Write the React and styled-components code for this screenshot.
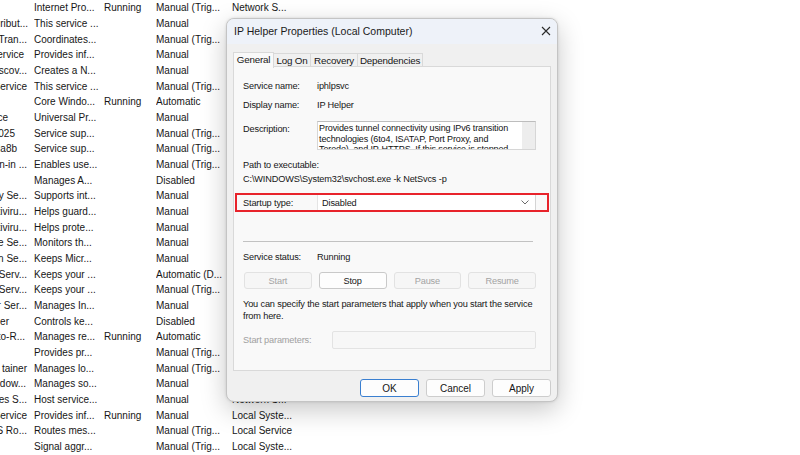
import styled, { createGlobalStyle } from "styled-components";

const GlobalStyle = createGlobalStyle`
  html, body {
    margin: 0;
    padding: 0;
    background: #fff;
  }
  body {
    width: 800px;
    height: 455px;
    overflow: hidden;
    font-family: "Liberation Sans", Arial, sans-serif;
  }
`;

// background services list (name, end of name fragment, description, status, startup, log on)
const services = [
  ["", 28, "Internet Pro...", "Running", "Manual (Trig...", "Network S..."],
  ["ribut...", 28, "This service ...", "", "Manual", "Local Syste..."],
  ["Tran...", 27, "Coordinates...", "", "Manual (Trig...", "Local Syste..."],
  ["ervice", 24, "Provides inf...", "", "Manual", "Local Service"],
  ["scov...", 27, "Creates a N...", "", "Manual", "Local Service"],
  ["Service", 27, "This service ...", "", "Manual (Trig...", "Local Syste..."],
  ["", 28, "Core Windo...", "Running", "Automatic", "Local Syste..."],
  ["ce", 8, "Universal Pr...", "", "Manual", "Local Syste..."],
  ["025", 15, "Service sup...", "", "Manual (Trig...", "Local Syste..."],
  ["la8b", 17, "Service sup...", "", "Manual (Trig...", "Local Syste..."],
  ["n-in ...", 27, "Enables use...", "", "Manual (Trig...", "Local Syste..."],
  ["", 28, "Manages A...", "", "Disabled", "Local Syste..."],
  ["y Se...", 27, "Supports int...", "", "Manual", "Local Syste..."],
  ["tiviru...", 27, "Helps guard...", "", "Manual", "Local Service"],
  ["tiviru...", 27, "Helps prote...", "", "Manual", "Local Syste..."],
  ["re Se...", 27, "Monitors th...", "", "Manual", "Local Syste..."],
  ["on Se...", 27, "Keeps Micr...", "", "Manual", "Local Syste..."],
  ["Serv...", 27, "Keeps your ...", "", "Automatic (D...", "Local Syste..."],
  ["Serv...", 27, "Keeps your ...", "", "Manual (Trig...", "Local Syste..."],
  ["r Ser...", 27, "Manages In...", "", "Manual", "Local Syste..."],
  ["er", 9, "Controls ke...", "", "Disabled", "Local Syste..."],
  ["to-R...", 25, "Manages re...", "Running", "Automatic", "Local Syste..."],
  ["", 28, "Provides pr...", "", "Manual (Trig...", "Local Syste..."],
  ["tainer", 27, "Manages lo...", "", "Manual (Trig...", "Local Syste..."],
  ["dow...", 26, "Manages so...", "", "Manual", "Local Syste..."],
  ["es S...", 27, "Host service...", "", "Manual", "Network S..."],
  ["Service", 27, "Provides inf...", "Running", "Manual", "Local Syste..."],
  ["S Ro...", 27, "Routes mes...", "", "Manual (Trig...", "Local Service"],
  ["", 28, "Signal aggr...", "", "Manual (Trig...", "Local Syste..."],
];

const descLines = [
  "Provides tunnel connectivity using IPv6 transition",
  "technologies (6to4, ISATAP, Port Proxy, and",
  "Teredo), and IP-HTTPS. If this service is stopped,",
  "the computer will not have the enhanced",
  "connectivity benefits that these technologies offer.",
];

export default function App() {
  return (
    <Screen>
      <GlobalStyle />
      <List>
        {services.map((s, i) => (
          <Row key={i}>
            <NameCell end={s[1]}>
              <span>{s[0]}</span>
            </NameCell>
            <Cell>{s[2]}</Cell>
            <Cell>{s[3]}</Cell>
            <Cell>{s[4]}</Cell>
            <Cell>{s[5]}</Cell>
          </Row>
        ))}
      </List>

      <Dialog>
        <TitleBar>
          <span>IP Helper Properties (Local Computer)</span>
          <svg width="10" height="10" viewBox="0 0 10 10">
            <path d="M1 1 L9 9 M9 1 L1 9" stroke="#2b2b2b" strokeWidth="1.1" fill="none" />
          </svg>
        </TitleBar>
        <Body>
          <Tabs>
            <Tab w={41} active>General</Tab>
            <Tab w={38}>Log On</Tab>
            <Tab w={48}>Recovery</Tab>
            <Tab w={66}>Dependencies</Tab>
          </Tabs>
          <Panel>
            <InfoRow top={11}>
              <Label>Service name:</Label>
              <span>iphlpsvc</span>
            </InfoRow>
            <InfoRow top={3}>
              <Label>Display name:</Label>
              <span>IP Helper</span>
            </InfoRow>
            <DescRow>
              <Label>Description:</Label>
              <DescBox>
                <DescText>
                  {descLines.map((l, i) => (
                    <div key={i}>{l}</div>
                  ))}
                </DescText>
                <ScrollStrip />
              </DescBox>
            </DescRow>
            <PathBlock>
              <div>Path to executable:</div>
              <div>C:\WINDOWS\System32\svchost.exe -k NetSvcs -p</div>
            </PathBlock>
            <StartupRow>
              <Label>Startup type:</Label>
              <Select>
                <span>Disabled</span>
                <svg width="8" height="5" viewBox="0 0 8 5">
                  <path d="M0.5 0.5 L4 4 L7.5 0.5" stroke="#6b6b6b" strokeWidth="1" fill="none" />
                </svg>
              </Select>
            </StartupRow>
            <Separator />
            <InfoRow top={7}>
              <Label>Service status:</Label>
              <span>Running</span>
            </InfoRow>
            <ActionGrid>
              <ActionButton disabled>Start</ActionButton>
              <ActionButton>Stop</ActionButton>
              <ActionButton disabled>Pause</ActionButton>
              <ActionButton disabled>Resume</ActionButton>
            </ActionGrid>
            <Hint>
              You can specify the start parameters that apply when you start the service
              <br />
              from here.
            </Hint>
            <ParamRow>
              <ParamLabel>Start parameters:</ParamLabel>
              <ParamInput />
            </ParamRow>
          </Panel>
          <Footer>
            <DialogButton primary>OK</DialogButton>
            <DialogButton>Cancel</DialogButton>
            <DialogButton>Apply</DialogButton>
          </Footer>
        </Body>
      </Dialog>
    </Screen>
  );
}

const Screen = styled.div`
  position: relative;
  width: 800px;
  height: 455px;
  overflow: hidden;
  background: #fff;
`;

const List = styled.div`
  display: flex;
  flex-direction: column;
`;

const Row = styled.div`
  display: grid;
  grid-template-columns: 34px 70px 52px 76px 100px;
  height: 15.68px;
  align-items: center;
  font-size: 10px;
  color: #161616;
  white-space: nowrap;
`;

const NameCell = styled.div`
  display: flex;
  justify-content: flex-end;
  overflow: hidden;
  padding-right: ${(p) => 34 - p.end}px;
  span {
    flex-shrink: 0;
  }
`;

const Cell = styled.div`
  overflow: hidden;
`;

const Dialog = styled.div`
  position: absolute;
  left: 226px;
  top: 18px;
  width: 332px;
  height: 384px;
  box-sizing: border-box;
  border: 1px solid #c4c4c4;
  border-radius: 8px;
  overflow: hidden;
  background: #f0f0f0;
  box-shadow: 0 8px 26px rgba(0, 0, 0, 0.22), 0 0 3px rgba(0, 0, 0, 0.12);
  font-size: 9.2px;
  letter-spacing: -0.15px;
  color: #161616;
`;

const TitleBar = styled.div`
  height: 24px;
  display: flex;
  align-items: center;
  justify-content: space-between;
  padding: 0 6px 1px 7px;
  background: #eef2f9;
  font-size: 10.5px;
  letter-spacing: 0;
  color: #1a1a1a;
`;

const Body = styled.div`
  padding: 7px 6px 0 6px;
`;

const Tabs = styled.div`
  display: flex;
  align-items: flex-end;
  height: 16px;
  position: relative;
  z-index: 1;
`;

const Tab = styled.div`
  width: ${(p) => p.w}px;
  height: ${(p) => (p.active ? 16 : 14)}px;
  box-sizing: border-box;
  display: flex;
  align-items: center;
  justify-content: center;
  border: 1px solid #d9d9d9;
  border-bottom: ${(p) => (p.active ? "none" : "1px solid #d9d9d9")};
  margin-left: ${(p) => (p.active ? 0 : -1)}px;
  margin-bottom: ${(p) => (p.active ? -1 : 0)}px;
  background: ${(p) => (p.active ? "#f9f9f9" : "#f0f0f0")};
  font-size: 9.8px;
  letter-spacing: -0.2px;
  padding-bottom: ${(p) => (p.active ? 2 : 0)}px;
`;

const Panel = styled.div`
  height: 305px;
  box-sizing: border-box;
  border: 1px solid #d9d9d9;
  background: #f9f9f9;
  padding: 0 14px 0 9px;
  margin-top: -1px;
`;

const InfoRow = styled.div`
  display: flex;
  align-items: center;
  height: 16px;
  margin-top: ${(p) => p.top}px;
`;

const Label = styled.div`
  width: 74px;
  flex-shrink: 0;
`;

const DescRow = styled.div`
  display: flex;
  margin-top: 8px;
  height: 29px;
  ${Label} {
    margin-top: 3px;
  }
`;

const DescBox = styled.div`
  flex: 1;
  display: flex;
  background: #fff;
  border: 1px solid #d6d6d6;
  border-top-color: #bdbdbd;
  overflow: hidden;
`;

const DescText = styled.div`
  flex: 1;
  padding: 1px 2px 0 1px;
  font-size: 9px;
  letter-spacing: -0.12px;
  line-height: 10.5px;
  white-space: nowrap;
  overflow: hidden;
  color: #111;
`;

const ScrollStrip = styled.div`
  width: 13px;
  background: #ededed;
`;

const PathBlock = styled.div`
  margin-top: 8px;
  line-height: 14px;
`;

const StartupRow = styled.div`
  display: flex;
  align-items: center;
  height: 19px;
  box-sizing: border-box;
  margin: 7px -13px 0 -8px;
  padding: 0 11px 0 6px;
  border: 2px solid #e8232b;
`;

const Select = styled.div`
  flex: 1;
  height: 15px;
  display: flex;
  align-items: center;
  justify-content: space-between;
  padding: 0 6px 0 4px;
  background: #fff;
  border-left: 1px solid #e4e4e4;
  border-right: 1px solid #d4d4d4;
`;

const Separator = styled.div`
  margin: 29px 3px 0 0;
  border-top: 1px solid #c2c2c2;
`;

const ActionGrid = styled.div`
  display: grid;
  grid-template-columns: repeat(4, 1fr);
  gap: 7px;
  margin: 7px 0 0 1px;
`;

const ActionButton = styled.div`
  height: 17px;
  box-sizing: border-box;
  display: flex;
  align-items: center;
  justify-content: center;
  border-radius: 3px;
  border: 1px solid ${(p) => (p.disabled ? "#e2e2e2" : "#c9c9c9")};
  background: ${(p) => (p.disabled ? "#f6f6f6" : "#fdfdfd")};
  color: ${(p) => (p.disabled ? "#a3a3a3" : "#161616")};
`;

const Hint = styled.div`
  margin-top: 10px;
  line-height: 11.5px;
  white-space: nowrap;
`;

const ParamRow = styled.div`
  display: flex;
  align-items: center;
  margin-top: 9px;
`;

const ParamLabel = styled.div`
  width: 89px;
  color: #a0a0a0;
`;

const ParamInput = styled.div`
  flex: 1;
  height: 18px;
  box-sizing: border-box;
  border: 1px solid #e3e3e3;
  border-radius: 2px;
  background: #f7f7f7;
`;

const Footer = styled.div`
  display: flex;
  justify-content: flex-end;
  gap: 7px;
  margin-top: 8px;
`;

const DialogButton = styled.div`
  width: 59px;
  height: 18px;
  box-sizing: border-box;
  display: flex;
  align-items: center;
  justify-content: center;
  border-radius: 3px;
  border: 1px solid ${(p) => (p.primary ? "#3a7fd0" : "#cdcdcd")};
  background: #fdfdfd;
  font-size: 10px;
  letter-spacing: 0;
  color: #161616;
`;
